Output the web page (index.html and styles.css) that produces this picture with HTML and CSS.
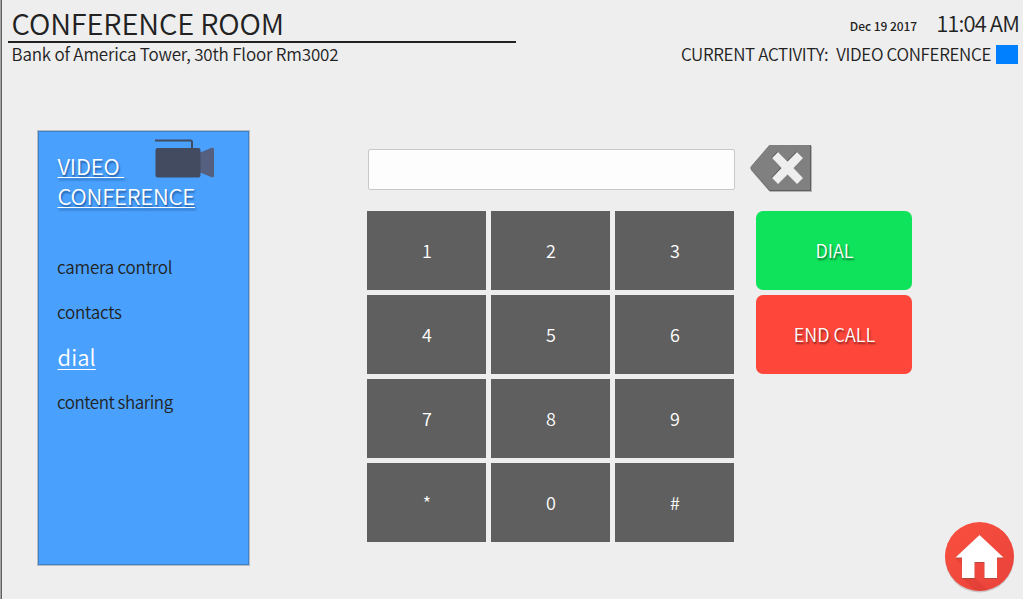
FILE: index.html
```html
<!DOCTYPE html>
<html lang="en">
<head>
<meta charset="utf-8">
<title>Conference Room</title>
<link rel="stylesheet" href="styles.css">
</head>
<body>
<div class="panel">
  <header class="header">
    <div class="room">
      <h1 class="room-name"><span>CONFERENCE ROOM</span></h1>
      <p class="room-place"><span>Bank of America Tower, 30th Floor Rm3002</span></p>
    </div>
    <div class="status">
      <div class="clock"><span class="date">Dec 19 2017</span><span class="time">11:04 AM</span></div>
      <div class="activity"><span class="activity-label">CURRENT ACTIVITY:</span><span class="activity-name">VIDEO CONFERENCE</span><i class="swatch"></i></div>
    </div>
  </header>
  <main class="main">
    <nav class="sidebar">
      <div class="sidebar-head">
        <h2 class="sidebar-title">VIDEO&nbsp;<br>CONFERENCE</h2>
        <svg class="camera" width="60" height="40" viewBox="0 0 60 40">
          <path d="M0 1.5H35.5Q37 1.5 37 3V11" fill="none" stroke="#434b60" stroke-width="2"/>
          <path d="M44 14L56 9Q59 8 59 10V37Q59 39 56 38L44 33Z" fill="#556080"/>
          <rect x=".5" y="9" width="45" height="29.5" rx="2" fill="#434b60"/>
        </svg>
      </div>
      <a class="item">camera control</a>
      <a class="item">contacts</a>
      <a class="item"><span class="current">dial</span></a>
      <a class="item item-long">content sharing</a>
    </nav>
    <section class="dialer">
      <div class="entry">
        <div class="number"></div>
        <svg class="erase" width="64" height="50" viewBox="0 0 64 50">
          <path d="M20 3H62V49H20L1.5 28Q0 26 1.5 24Z" fill="#777" opacity=".5"/>
          <path d="M19.5 2H61V48H19.5L1 26.500Q.2 25 1 23.500Z" fill="#5f5f5f"/>
          <path d="M19.500 2H60V47H19.500L1 26Q.2 25 1 23.500Z" fill="#808080"/>
          <path d="M28 8L37.500 17.500L47 8L53 14L43.500 24L53 34L47 40L37.500 30.500L28 40L22 34L31.500 24L22 14Z" fill="#454545" transform="translate(-.5 .5)"/>
          <path d="M28 9L37.500 18.500L47 9L53 15L43.500 25L53 35L47 41L37.500 31.500L28 41L22 35L31.500 25L22 15Z" fill="#eee"/>
        </svg>
      </div>
      <div class="controls">
        <div class="keypad">
          <div class="key">1</div><div class="key">2</div><div class="key">3</div>
          <div class="key">4</div><div class="key">5</div><div class="key">6</div>
          <div class="key">7</div><div class="key">8</div><div class="key">9</div>
          <div class="key">*</div><div class="key">0</div><div class="key">#</div>
        </div>
        <div class="calls">
          <div class="call dial">DIAL</div>
          <div class="call end">END CALL</div>
        </div>
      </div>
    </section>
  </main>
  <svg class="home" width="75" height="76" viewBox="-.5 0 75 76">
    <defs>
      <linearGradient id="red" x1="0" y1="0" x2="1" y2="1"><stop offset="0" stop-color="#f9503f"/><stop offset="1" stop-color="#e9423a"/></linearGradient>
      <clipPath id="disc"><circle cx="37" cy="36.500" r="34.500"/></clipPath>
    </defs>
    <circle cx="37" cy="38" r="34.500" fill="#b5aaaa" opacity=".6"/>
    <circle cx="37" cy="36.500" r="34.500" fill="url(#red)"/>
    <g clip-path="url(#disc)" fill="#c9362f" opacity=".3"><path d="M13 38L20 46V58L36 74L48 72L32 58V43Z"/></g>
    <path d="M37 16L61 38.500H54.500V59H42V43H32V59H19.500V38.500H13Z" fill="#9b4843" opacity=".7"/>
    <path d="M37 15L61 37.500H54.500V58H42V42H32V58H19.500V37.500H13Z" fill="#fff"/>
  </svg>
</div>
</body>
</html>
```
FILE: styles.css
```css
* { box-sizing: border-box; margin: 0; padding: 0; }
body {
  background: #eee;
  color: #222;
  font-family: "Noto Sans CJK JP", "Noto Sans CJK SC", sans-serif;
  font-weight: 350;
  overflow: hidden;
}
.panel {
  position: relative;
  width: 1023px;
  height: 599px;
  border-left: 1px solid #a5a5a5;
  box-shadow: inset 1px 0 #606060;
}
.header { display: flex; justify-content: space-between; height: 130px; padding-left: 7px; }
.room { width: 508px; }
.room-name {
  height: 43px;
  padding-left: 3.5px;
  border-bottom: 2px solid #222;
  font-size: 29px;
  font-weight: 350;
  letter-spacing: -.13px;
  line-height: 45px;
  white-space: nowrap;
}
.room-place { padding-left: 3.5px; font-size: 17px; letter-spacing: -.18px; line-height: 22px; white-space: nowrap; }
.clock { display: flex; justify-content: flex-end; align-items: flex-start; height: 44px; padding-right: 4px; line-height: 44px; }
.date { margin-right: 19px; padding-top: 4px; font-size: 12px; font-weight: 500; letter-spacing: -.05px; line-height: 43px; }
.time { font-size: 22px; letter-spacing: -.9px; }
.activity { display: flex; justify-content: flex-end; align-items: center; padding-right: 5px; font-size: 17px; line-height: 20px; letter-spacing: -.33px; white-space: pre; }
.activity-name { margin-left: 8px; }
.swatch { width: 22px; height: 19px; margin-left: 5px; background: #0080ff; }
.main { display: flex; padding-left: 36px; }
.sidebar {
  width: 213px;
  height: 436px;
  padding: 0 19px;
  border: 1px solid #b9bcc0;
  background: #49a1fd;
  box-shadow: inset 0 0 0 1px #3b82c9;
}
.sidebar-head { display: flex; height: 113px; padding: 19px 0 0 .5px; }
.sidebar-title {
  width: 97.5px;
  color: #fff;
  font-size: 22px;
  font-weight: 350;
  letter-spacing: -.2px;
  line-height: 30px;
  text-decoration: underline;
  text-decoration-thickness: 1px;
  text-underline-offset: 2px;
  text-shadow: 1px 2px 2px rgba(0, 40, 100, .6);
}
.camera { flex: none; margin-top: -11px; }
.item { display: flex; align-items: center; height: 45px; font-size: 17px; letter-spacing: -.22px; }
.item-long { letter-spacing: -.48px; }
.current {
  margin: -2px 0 0 .5px;
  color: #fff;
  font-size: 22px;
  letter-spacing: .1px;
  line-height: 44px;
  text-decoration: underline;
  text-decoration-thickness: 1px;
  text-underline-offset: 3px;
}
.dialer { padding: 13px 0 0 117px; }
.entry { display: flex; height: 68px; }
.number { width: 367px; height: 41px; margin: 6px 15px 0 1px; border: 1px solid #c8c8c8; border-radius: 2px; background: #fdfdfd; }
.controls { display: flex; gap: 22px; }
.keypad { display: grid; grid-template-columns: repeat(3, 119px); grid-auto-rows: 79px; gap: 5px; }
.key { display: flex; align-items: center; justify-content: center; padding: 0 0 1px 1px; background: #5f5f5f; color: #fff; font-size: 18px; }
.calls { display: flex; flex-direction: column; gap: 5px; }
.call {
  display: flex;
  align-items: center;
  justify-content: center;
  width: 156px;
  height: 79px;
  padding: 0 0 1px 1px;
  border-radius: 7px;
  color: #fff;
  font-size: 18px;
  text-shadow: 1px 2px 2px rgba(0, 0, 0, .5);
}
.dial { background: #0fe25b; }
.end { background: #ff463b; }
.home { position: absolute; left: 941px; top: 520px; }
```
